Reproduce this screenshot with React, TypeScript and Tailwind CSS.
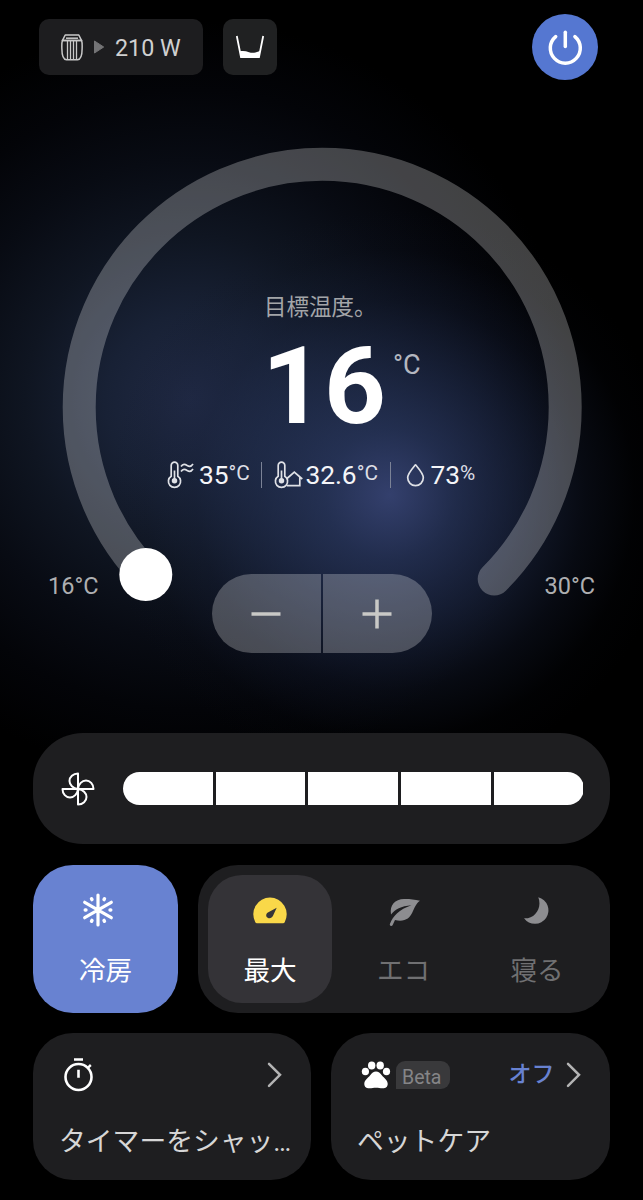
import type { ReactNode } from "react";

function BarrelIcon() {
  return (
    <svg width="22" height="27" viewBox="0 0 22 27" fill="none" stroke="#c9c9c9" strokeWidth="1.5">
      <path d="M4.2 1h13.6l2.800 5.600H1.400z" strokeLinejoin="round" />
      <path d="M5 4.200h12" />
      <path d="M1.400 6.600C.6 9 .8 12 .9 15c0 5 .6 10.500 4.600 10.800h11c4-.3 4.600-5.800 4.600-10.800.1-3 .3-6-.5-8.400z" />
      <path d="M6.500 7v18M9.500 7v18M12.500 7v18M15.500 7v18" strokeWidth="1.300" />
    </svg>
  );
}

function TankIcon() {
  return (
    <svg width="30" height="24" viewBox="0 0 30 24" fill="none" stroke="#fff" strokeWidth="1.800">
      <path d="M1.800 1l4.200 21h18l4.200-21" />
      <path d="M4.800 16.300c3.200-.8 6.200-.3 9.200.9 3.800 1.300 7 .3 11.200-1.500L24 22H6z" fill="#fff" stroke="none" />
    </svg>
  );
}

function PowerIcon() {
  return (
    <svg width="36" height="36" viewBox="0 0 36 36" fill="none" stroke="#fff" strokeWidth="3.500" strokeLinecap="round">
      <path d="M18.300 3.200v14.300" />
      <path d="M8.700 7.600a15 15 0 1 0 19.200 0" />
    </svg>
  );
}

function Thermometer() {
  return (
    <>
      <path d="M4.200 15.200V4.500a3.300 3.300 0 0 1 6.600 0v10.700a6.100 6.100 0 1 1-6.600 0z" />
      <path d="M7.500 9.500v9" />
      <circle cx="7.500" cy="19.800" r="1.900" fill="#dfe1e6" />
    </>
  );
}

function OutdoorIcon() {
  return (
    <svg width="28" height="28" viewBox="0 0 28 28" fill="none" stroke="#dfe1e6" strokeWidth="1.700">
      <Thermometer />
      <path d="M14 5.500c2-3 4-2.500 6.200-1 2.200 1.400 4 1.200 5.800-1.500M14 10.500c2-3 4-2.500 6.200-1 2.200 1.400 4 1.200 5.800-1.500" />
    </svg>
  );
}

function IndoorIcon() {
  return (
    <svg width="30" height="28" viewBox="0 0 30 28" fill="none" stroke="#dfe1e6" strokeWidth="1.700">
      <Thermometer />
      <path d="M13 17.500l7.300-6.300 8 6.800M25.800 16v8.700H13" />
    </svg>
  );
}

function DropIcon() {
  return (
    <svg width="19" height="24" viewBox="0 0 19 24" fill="none" stroke="#dfe1e6" strokeWidth="1.700">
      <path d="M9.500 1.800C6 6 1.700 10.500 1.700 14.800a7.800 7.800 0 0 0 15.600 0c0-4.300-4.300-8.800-7.800-13z" strokeLinejoin="round" />
    </svg>
  );
}

function FanIcon() {
  const blade = "M17 17H32.500C32.500 12 29 8.500 25 8.500S17.500 12 17 17z";
  return (
    <svg width="34" height="34" viewBox="0 0 34 34" fill="none" stroke="#fff" strokeWidth="2" strokeLinejoin="round">
      <path d={blade} />
      <path d={blade} transform="rotate(90 17 17)" />
      <path d={blade} transform="rotate(180 17 17)" />
      <path d={blade} transform="rotate(270 17 17)" />
    </svg>
  );
}

function SnowIcon() {
  return (
    <svg width="34" height="34" viewBox="-17 -17 34 34" stroke="#fff" strokeLinecap="round" fill="none">
      <g strokeWidth="3.200">
        <path d="M0-15V15M-13.300-7.700L13.300 7.700M13.300-7.700L-13.300 7.700" />
      </g>
      <g strokeWidth="3.400">
        <path d="M-12.800 0h.8M12.800 0h-.8M-6.500-11.300l.5.900M6.500-11.300l-.5.900M-6.500 11.300l.5-.9M6.500 11.300l-.5-.9" />
      </g>
    </svg>
  );
}

function GaugeIcon() {
  return (
    <svg width="34" height="34" viewBox="0 0 34 34">
      <path d="M2.300 30.200A16.700 16.700 0 1 1 31.700 30.200Q31.200 31.300 30 31.300H4Q2.800 31.300 2.300 30.200z" transform="translate(0 -2)" fill="#f9d849" />
      <path d="M23.700 13.700l-3.700 8c-1 2.200-3.300 3.200-5.300 2s-2-4 .2-5.300z" fill="#353438" />
    </svg>
  );
}

function LeafIcon() {
  return (
    <svg width="34" height="34" viewBox="0 0 34 34" fill="#8d8d90">
      <path d="M4 20.500C2.500 11 8 5.200 17 5c5-.1 10 .2 16 1.800-4 2.700-5.500 7-7.800 12-2.500 5.500-7.500 9.500-17.200 7.300l-2.300 5c-.8 1.600-3.500.9-2.800-1C6 22 12 15.500 24.500 11.300 14 12 8 15.500 4 20.500z" />
    </svg>
  );
}

function MoonIcon() {
  return (
    <svg width="34" height="34" viewBox="0 0 34 34" fill="#8d8d90">
      <path d="M18.300 3.300A13.500 13.500 0 1 1 4 24.300C14.500 25 22.500 14.500 18.300 3.300z" />
    </svg>
  );
}

function StopwatchIcon() {
  return (
    <svg width="32" height="36" viewBox="0 0 32 36" fill="none" stroke="#fff" strokeWidth="2.600">
      <circle cx="15.500" cy="20" r="13" />
      <path d="M11 2.500h9M15.500 12.800v8" />
      <path d="M24.800 10.800l3-2.800" strokeWidth="2.400" />
    </svg>
  );
}

function PawIcon() {
  return (
    <svg width="30" height="28" viewBox="0 0 30 28" fill="#fff">
      <ellipse cx="4.400" cy="10.500" rx="3.600" ry="3.800" />
      <ellipse cx="10.700" cy="4.400" rx="3.700" ry="4" />
      <ellipse cx="19.200" cy="4.400" rx="3.700" ry="4" />
      <ellipse cx="25.500" cy="10.500" rx="3.600" ry="3.800" />
      <path d="M15 10.500c2.500 0 4 1.500 6 4s5.700 4.500 5.700 8.200c0 3.500-2.500 4.800-5.200 4.600-2.500-.3-4-.6-6.500-.6s-4 .3-6.500.6c-2.700.2-5.200-1.100-5.200-4.600 0-3.700 3.700-5.700 5.700-8.200s3.500-4 6-4z" />
    </svg>
  );
}

function Chevron() {
  return (
    <svg width="15" height="26" viewBox="0 0 15 26" fill="none" stroke="#b4b4b4" strokeWidth="2.500" strokeLinecap="round">
      <path d="M2 1.800l11 11L2 23.800" />
    </svg>
  );
}

function Header() {
  return (
    <header className="mt-[14px] flex h-[66px] items-center pr-[45px] pl-[39px]">
      <div className="flex h-14 w-[164px] items-center rounded-[10px] bg-[#1d1d1f] pl-[22px]">
        <BarrelIcon />
        <svg className="ml-[11px]" width="10" height="14" viewBox="0 0 10 14" fill="#747476">
          <path d="M.5 1v12L9.700 7z" stroke="#747476" strokeLinejoin="round" />
        </svg>
        <span className="mt-[3px] ml-[11px] text-[23.300px] leading-none text-[#d0d0d0]">210 W</span>
      </div>
      <div className="ml-[19.500px] flex h-14 w-[54.500px] items-center justify-center rounded-[10px] bg-[#202122]">
        <TankIcon />
      </div>
      <button className="ml-auto flex size-[66px] items-center justify-center rounded-full bg-[#5577d1]">
        <PowerIcon />
      </button>
    </header>
  );
}

function Stat({ icon, value, unit }: { icon: ReactNode; value: string; unit: string }) {
  return (
    <div className="flex items-center text-[#f4f5f8]">
      {icon}
      <span className="text-[26.300px] leading-[28px]">{value}</span>
      <span className="-mt-[4px] text-[20.800px] leading-[22px] text-[#dcdee5]">{unit}</span>
    </div>
  );
}

function Dial() {
  return (
    <section className="relative flex h-[653px] flex-col">
      <svg className="absolute top-0 left-0" width="643" height="653" viewBox="0 80 643 653">
        <path d="M150.200 579A243 243 0 1 1 494.200 579" fill="none" stroke="#fff" strokeOpacity=".255" strokeWidth="33" strokeLinecap="round" />
        <circle cx="145.800" cy="574.500" r="26.500" fill="#fff" />
      </svg>
      <p className="mt-[211px] h-[32px] pl-[264px] text-[22.500px] leading-[32px] text-[#a3a5a8]">目標温度。</p>
      <div className="flex h-[128px] items-start pl-[262px]">
        <span className="-mt-px w-[127px] text-[108px] leading-[128px] font-bold text-white">16</span>
        <span className="mt-[27px] ml-[4px] text-[27px] leading-[30px] text-[#b4b7c0]">°C</span>
      </div>
      <div className="mt-[10px] flex h-[28px] items-center pl-[167px]">
        <Stat icon={<span className="mr-[4px]"><OutdoorIcon /></span>} value="35" unit="°C" />
        <span className="ml-[11px] h-[26px] w-[1.500px] bg-[#7b8296]" />
        <div className="ml-[12px]">
          <Stat icon={<span className="mr-px"><IndoorIcon /></span>} value="32.6" unit="°C" />
        </div>
        <span className="ml-[12px] h-[26px] w-[1.500px] bg-[#7b8296]" />
        <div className="ml-[15px]">
          <Stat icon={<span className="mr-[5px]"><DropIcon /></span>} value="73" unit="%" />
        </div>
      </div>
      <div className="mt-[85px] flex h-[79px] items-start justify-between pr-[48px] pl-[48px] text-[23.500px] leading-[24px] text-[#aeafb1]">
        <span className="w-[80px]">16°C</span>
        <div className="flex h-[79px] w-[220px] gap-[2px] text-[#c9c9c6]">
          <button className="flex flex-1 items-center justify-center rounded-l-full bg-white/25">
            <svg width="30" height="30" viewBox="0 0 30 30" stroke="currentColor" strokeWidth="3.500">
              <path d="M.5 15h29" />
            </svg>
          </button>
          <button className="flex flex-1 items-center justify-center rounded-r-full bg-white/25">
            <svg width="30" height="30" viewBox="0 0 30 30" stroke="currentColor" strokeWidth="3.500">
              <path d="M.5 15h29M15 .5v29" />
            </svg>
          </button>
        </div>
        <span className="w-[80px] text-right">30°C</span>
      </div>
    </section>
  );
}

function FanSpeed() {
  return (
    <section className="mx-[33px] flex h-[111px] w-[577px] items-center rounded-[50px] bg-[#1e1e20] pl-[28px]">
      <FanIcon />
      <div className="ml-[28px] grid h-[33px] w-[460.500px] grid-cols-5 gap-[3px] overflow-hidden rounded-full">
        {[1, 2, 3, 4, 5].map((level) => (
          <span key={level} className="bg-white" />
        ))}
      </div>
    </section>
  );
}

function Preset({ icon, label, className }: { icon: ReactNode; label: string; className: string }) {
  return (
    <button className={`flex h-[128px] flex-col items-center rounded-[34px] pt-[19px] ${className}`}>
      {icon}
      <span className="mt-[25px] text-[26.600px] leading-[36px]">{label}</span>
    </button>
  );
}

function Modes() {
  return (
    <section className="mt-[20.500px] flex h-[148px] gap-[20px] pl-[33px]">
      <button className="flex w-[145px] flex-col items-center rounded-[40px] bg-[#6882d1] pt-[28.500px] text-white">
        <span className="mr-[16px]"><SnowIcon /></span>
        <span className="mt-[25.500px] text-[26.600px] leading-[36px]">冷房</span>
      </button>
      <div className="flex w-[412px] items-center rounded-[40px] bg-[#1e1e20] px-[10px]">
        <Preset icon={<GaugeIcon />} label="最大" className="w-[124px] bg-[#343337] text-white" />
        <Preset icon={<LeafIcon />} label="エコ" className="ml-[9.500px] w-[124px] text-[#707072]" />
        <Preset icon={<MoonIcon />} label="寝る" className="ml-[9.500px] w-[124px] text-[#707072]" />
      </div>
    </section>
  );
}

function Tiles() {
  return (
    <section className="mt-[20px] flex h-[147.500px] gap-[20px] pl-[33px]">
      <div className="flex w-[278px] flex-col rounded-[40px] bg-[#1e1e20] pt-[24px] pl-[26px]">
        <div className="flex h-[36px] items-center pr-[29px] pl-[4px]">
          <StopwatchIcon />
          <span className="ml-auto"><Chevron /></span>
        </div>
        <p className="mt-[30px] text-[26.800px] leading-[38px] whitespace-nowrap text-[#d6d6d6]">タイマーをシャッ…</p>
      </div>
      <div className="flex w-[278.500px] flex-col rounded-[40px] bg-[#1e1e20] pt-[24px] pl-[26px]">
        <div className="flex h-[36px] items-center pr-[29px] pl-[4px]">
          <PawIcon />
          <span className="ml-[5px] h-[28px] w-[54px] rounded-[9px] rounded-bl-none bg-[#39393b] pl-[6px] text-[19.500px] leading-[33px] text-[#858587]">Beta</span>
          <span className="mt-px ml-auto text-[23px] leading-[30px] font-medium text-[#6882d1]">オフ</span>
          <span className="ml-[11px]"><Chevron /></span>
        </div>
        <p className="mt-[30px] text-[26.800px] leading-[38px] whitespace-nowrap text-[#d6d6d6]">ペットケア</p>
      </div>
    </section>
  );
}

export default function App() {
  return (
    <main
      lang="ja"
      className="flex h-[1200px] w-[643px] flex-col overflow-hidden bg-black bg-[radial-gradient(circle_at_390px_495px,rgba(62,76,130,0.8)_0,rgba(48,64,110,0.64)_65px,rgba(38,52,90,0.5)_130px,rgba(26,36,64,0.28)_195px,rgba(16,22,40,0.08)_245px,transparent_285px),radial-gradient(circle_at_190px_400px,#202944_0,#182135_85px,#0f1521_165px,#080b13_240px,#030408_310px,#000_380px)] font-['Roboto','Noto_Sans_CJK_JP',sans-serif]"
    >
      <Header />
      <Dial />
      <FanSpeed />
      <Modes />
      <Tiles />
    </main>
  );
}
